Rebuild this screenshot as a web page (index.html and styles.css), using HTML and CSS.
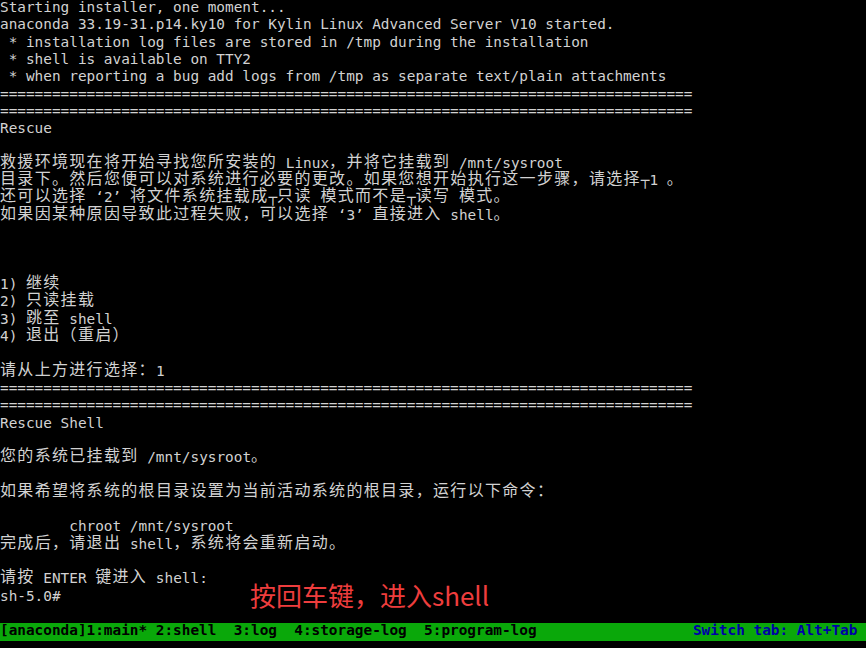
FILE: index.html
```html
<!DOCTYPE html>
<html lang="zh-CN">

<head>
    <meta charset="UTF-8">
    <meta name="viewport" content="width=device-width, initial-scale=1.0">
    <title>Rescue Shell</title>
    <link rel="stylesheet" href="styles.css">
</head>

<body>
    <div class="screen">
        <div class="term">
            <div class="ln">Starting installer, one moment...</div>
            <div class="ln">anaconda 33.19-31.p14.ky10 for Kylin Linux Advanced Server V10 started.</div>
            <div class="ln"> * installation log files are stored in /tmp during the installation</div>
            <div class="ln"> * shell is available on TTY2</div>
            <div class="ln"> * when reporting a bug add logs from /tmp as separate text/plain attachments</div>
            <div class="ln">================================================================================</div>
            <div class="ln">================================================================================</div>
            <div class="ln">Rescue</div>
            <div class="ln"></div>
            <div class="ln"><span class="zh">救援环境现在将开始寻找您所安装的</span> Linux<span class="zh">，并将它挂载到</span> /mnt/sysroot</div>
            <div class="ln"><span class="zh">目录下。然后您便可以对系统进行必要的更改。如果您想开始执行这一步骤，请选择</span>┬1 <span class="zh">。</span></div>
            <div class="ln"><span class="zh">还可以选择</span> ‘2’ <span class="zh">将文件系统挂载成</span>┬<span class="zh">只读</span> <span class="zh">模式而不是</span>┬<span class="zh">读写</span> <span class="zh">模式。</span></div>
            <div class="ln"><span class="zh">如果因某种原因导致此过程失败，可以选择</span> ‘3’ <span class="zh">直接进入</span> shell<span class="zh">。</span></div>
            <div class="ln"></div>
            <div class="ln"></div>
            <div class="ln"></div>
            <div class="ln">1) <span class="zh">继续</span></div>
            <div class="ln">2) <span class="zh">只读挂载</span></div>
            <div class="ln">3) <span class="zh">跳至</span> shell</div>
            <div class="ln">4) <span class="zh">退出（重启）</span></div>
            <div class="ln"></div>
            <div class="ln"><span class="zh">请从上方进行选择：</span>1</div>
            <div class="ln">================================================================================</div>
            <div class="ln">================================================================================</div>
            <div class="ln">Rescue Shell</div>
            <div class="ln"></div>
            <div class="ln"><span class="zh">您的系统已挂载到</span> /mnt/sysroot<span class="zh">。</span></div>
            <div class="ln"></div>
            <div class="ln"><span class="zh">如果希望将系统的根目录设置为当前活动系统的根目录，运行以下命令：</span></div>
            <div class="ln"></div>
            <div class="ln">        chroot /mnt/sysroot</div>
            <div class="ln"><span class="zh">完成后，请退出</span> shell<span class="zh">，系统将会重新启动。</span></div>
            <div class="ln"></div>
            <div class="ln"><span class="zh">请按</span> ENTER <span class="zh">键进入</span> shell:</div>
            <div class="ln">sh-5.0#</div>
            <div class="ln"></div>
            <div class="ln status">
                <span>[anaconda]1:main* 2:shell  3:log  4:storage-log  5:program-log</span>
                <span class="hint">Switch tab: Alt+Tab</span>
            </div>
        </div>

        <div class="note">按回车键，进入shell</div>
    </div>
</body>

</html>
```

FILE: styles.css
```css
body {
    margin: 0;
    padding: 0;
    background-color: #000;
    height: 648px;
    overflow: hidden;
}

.screen {
    position: relative;
    width: 866px;
    height: 648px;
    background-color: #000;
}

.term {
    display: grid;
    grid-auto-rows: 17.32px;
    font-family: 'DejaVu Sans Mono', 'Liberation Mono', monospace;
    font-size: 14.384px;
    line-height: 14.5px;
    color: #d2d2d2;
}

.ln {
    white-space: pre;
    overflow: visible;
}

/* each CJK glyph takes two terminal cells */
.zh {
    font-family: 'Noto Sans CJK SC', sans-serif;
    font-size: 16px;
    letter-spacing: 1.32px;
    line-height: 0;
    vertical-align: 1.2px;
}

.status {
    display: flex;
    justify-content: space-between;
    padding-right: 8.66px;
    background-color: #0aa80a;
    color: #000;
    font-weight: bold;
    line-height: 15px;
}

.status .hint {
    color: #0000a8;
}

.note {
    position: absolute;
    left: 250px;
    top: 582px;
    font-family: 'Noto Sans CJK SC', sans-serif;
    font-size: 26px;
    line-height: 26px;
    color: #ee3d3d;
}
```
